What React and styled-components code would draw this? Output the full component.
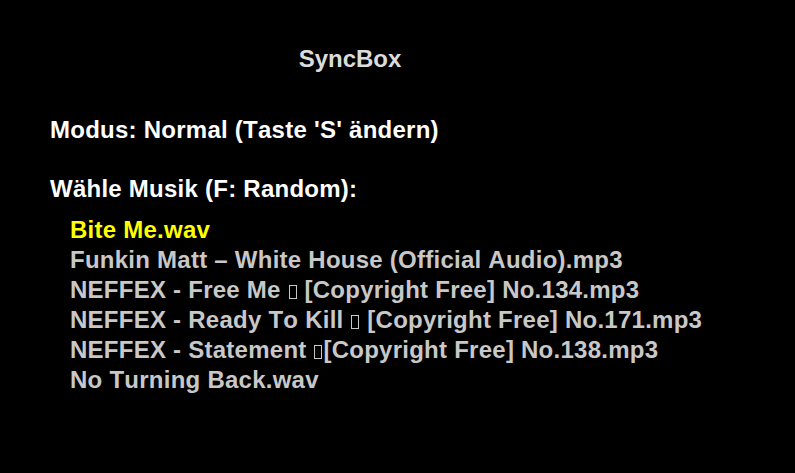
import React from "react";
import styled, { createGlobalStyle } from "styled-components";

const GlobalStyle = createGlobalStyle`
  html, body {
    margin: 0;
    padding: 0;
    background: #000;
  }
  body {
    font-family: "Liberation Sans", Arial, sans-serif;
    font-kerning: none;
    font-variant-ligatures: none;
  }
`;

const Screen = styled.div`
  width: 795px;
  height: 473px;
  background: #000;
  padding-top: 44px;
  box-sizing: border-box;
  overflow: hidden;
`;

const Title = styled.div`
  width: 700px;
  text-align: center;
  color: #dcdcdc;
  font-size: 24px;
  font-weight: bold;
  line-height: 30px;
`;

const Label = styled.div`
  margin-top: ${(p) => p.$gap}px;
  padding-left: 50px;
  color: #ffffff;
  font-size: 24px;
  font-weight: bold;
  line-height: 30px;
  letter-spacing: 0.25px;
  white-space: nowrap;
`;

const TrackList = styled.ul`
  list-style: none;
  margin: 11px 0 0;
  padding: 0 0 0 70px;
`;

const Track = styled.li`
  color: ${(p) => (p.$active ? "#ffff00" : "#c8c8c8")};
  font-size: 24px;
  font-weight: bold;
  line-height: 30px;
  letter-spacing: 0.25px;
  white-space: nowrap;
`;

// missing-glyph box, as the emoji shows up in the original
const Tofu = styled.span`
  display: inline-block;
  width: 6px;
  height: 12px;
  border: 1px solid #c8c8c8;
  margin: 0 1px;
  vertical-align: -1px;
`;

const tracks = [
  ["Bite Me.wav"],
  ["Funkin Matt \u2013 White House (Official Audio).mp3"],
  ["NEFFEX - Free Me ", " [Copyright Free] No.134.mp3"],
  ["NEFFEX - Ready To Kill ", " [Copyright Free] No.171.mp3"],
  ["NEFFEX - Statement ", "[Copyright Free] No.138.mp3"],
  ["No Turning Back.wav"],
];

export default function App() {
  return (
    <>
      <GlobalStyle />
      <Screen>
        <Title>SyncBox</Title>
        <Label $gap={41}>Modus: Normal (Taste 'S' ändern)</Label>
        <Label $gap={29}>Wähle Musik (F: Random):</Label>
        <TrackList>
          {tracks.map((parts, i) => (
            <Track key={i} $active={i === 0}>
              {parts[0]}
              {parts.length > 1 && <Tofu />}
              {parts[1]}
            </Track>
          ))}
        </TrackList>
      </Screen>
    </>
  );
}
